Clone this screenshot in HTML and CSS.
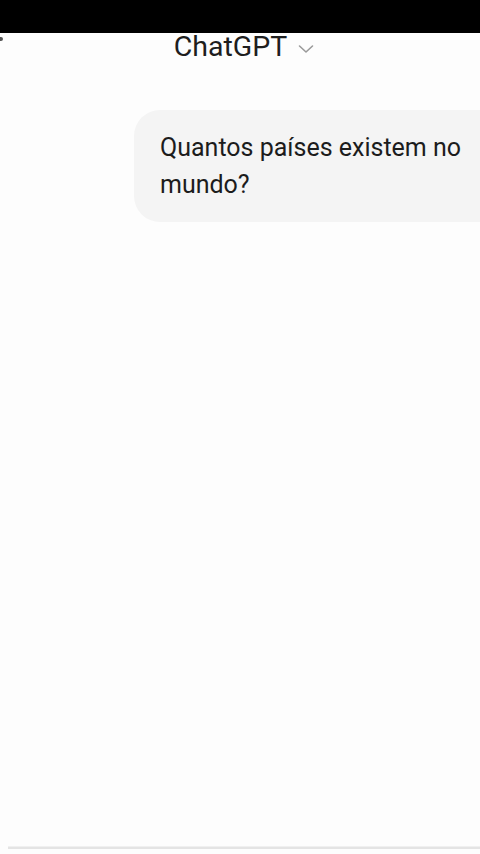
FILE: index.html
```html
<!DOCTYPE html>
<html lang="pt">
<head>
    <meta charset="UTF-8">
    <meta name="viewport" content="width=device-width, initial-scale=1.0">
    <title>ChatGPT</title>
    <link rel="stylesheet" href="styles.css">
</head>
<body>
    <div class="status-bar"></div>
    <div class="app">
        <header class="top-bar">
            <span class="side-mark"></span>
            <div class="title">
                ChatGPT
                <svg class="chevron" width="16" height="10" viewBox="0 0 16 10">
                    <path d="M1.5 2 L8 8 L14.5 2" fill="none" stroke="#9a9a9a" stroke-width="1.6" stroke-linecap="round" stroke-linejoin="round"/>
                </svg>
            </div>
        </header>

        <main class="chat">
            <div class="message user">
                <div class="bubble">Quantos países existem no mundo?</div>
            </div>
        </main>

        <footer class="composer-edge"></footer>
    </div>
</body>
</html>
```

FILE: styles.css
```css
html, body {
    margin: 0;
    padding: 0;
    height: 100%;
}
body {
    font-family: Roboto, "Noto Sans", Arial, sans-serif;
    background-color: #fdfdfd;
    color: #1c1c1c;
    overflow: hidden;
}
.status-bar {
    height: 33px;
    background: #000;
}
.app {
    height: calc(100% - 33px);
    display: flex;
    flex-direction: column;
}
.top-bar {
    height: 34px;
    display: flex;
    justify-content: center;
    align-items: flex-start;
    position: relative;
}
.side-mark {
    position: absolute;
    left: 0;
    top: 4px;
    width: 3px;
    height: 4px;
    background: #555;
    border-radius: 0 2px 2px 0;
}
.title {
    font-size: 28.5px;
    line-height: 25px;
    padding-top: 1px;
    color: #1e1e1e;
    display: flex;
    align-items: center;
    gap: 11px;
    margin-left: 8px;
}
.chevron {
    margin-top: 4px;
}
.chat {
    flex: 1;
    padding-top: 43px;
}
.message.user {
    display: flex;
    justify-content: flex-end;
}
.bubble {
    margin-left: 134px;
    flex: 1;
    background: #f4f4f4;
    border-radius: 26px 0 0 26px;
    padding: 19px 8px 19px 26px;
    font-size: 25px;
    line-height: 37px;
    color: #1c1c1c;
}
.composer-edge {
    height: 7px;
    margin-left: 8px;
    border-top: 1px solid #f0f0f0;
    box-shadow: inset 0 2px 0 #e4e4e4;
}
```
